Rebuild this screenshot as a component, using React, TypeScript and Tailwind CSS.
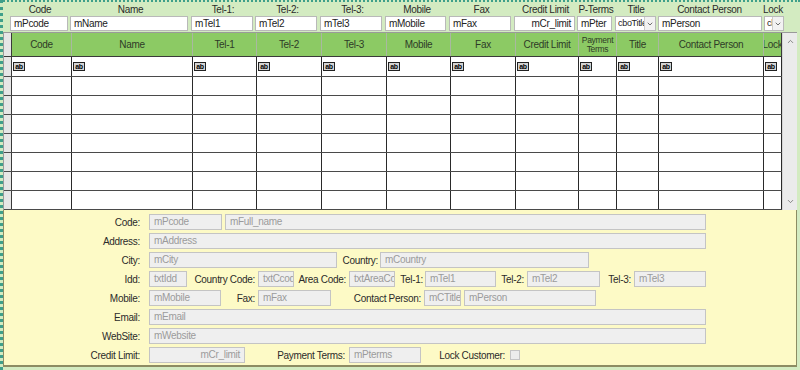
import React from 'react';
import { ChevronDown, ChevronUp } from 'lucide-react';

type Col = { key: string; label: React.ReactNode; w: string };

const columns: Col[] = [
  { key: 'code', label: 'Code', w: 'w-[60px]' },
  { key: 'name', label: 'Name', w: 'w-[121px]' },
  { key: 'tel1', label: 'Tel-1', w: 'w-[64px]' },
  { key: 'tel2', label: 'Tel-2', w: 'w-[65px]' },
  { key: 'tel3', label: 'Tel-3', w: 'w-[65px]' },
  { key: 'mobile', label: 'Mobile', w: 'w-[64px]' },
  { key: 'fax', label: 'Fax', w: 'w-[65px]' },
  { key: 'credit', label: 'Credit Limit', w: 'w-[63px]' },
  {
    key: 'pterms',
    label: (
      <span className="text-[8.5px] leading-[9px] block">
        Payment
        <br />
        Terms
      </span>
    ),
    w: 'w-[38px]',
  },
  { key: 'title', label: 'Title', w: 'w-[42px]' },
  { key: 'person', label: 'Contact Person', w: 'w-[105px]' },
  { key: 'lock', label: 'Lock', w: 'w-[18px]' },
];

const topFields = [
  { label: 'Code', value: 'mPcode', w: 'w-[60px]', iw: 'w-[58px]' },
  { label: 'Name', value: 'mName', w: 'w-[121px]', iw: 'w-[118px]' },
  { label: 'Tel-1:', value: 'mTel1', w: 'w-[64px]', iw: 'w-[62px]' },
  { label: 'Tel-2:', value: 'mTel2', w: 'w-[65px]', iw: 'w-[62px]' },
  { label: 'Tel-3:', value: 'mTel3', w: 'w-[65px]', iw: 'w-[62px]' },
  { label: 'Mobile', value: 'mMobile', w: 'w-[64px]', iw: 'w-[61px]' },
  { label: 'Fax', value: 'mFax', w: 'w-[65px]', iw: 'w-[62px]' },
  { label: 'Credit Limit', value: 'mCr_limit', w: 'w-[63px]', iw: 'w-[61px]', right: true },
  { label: 'P-Terms', value: 'mPter', w: 'w-[38px]', iw: 'w-[35px]' },
];

const AbIcon = () => (
  <span className="inline-flex items-center justify-center h-[9px] w-[12px] border border-[#222] bg-[#d4d4d4] text-[7px] font-bold leading-none text-black tracking-[-0.4px]">
    ab
  </span>
);

const FormInput = ({ w, v, right }: { w: string; v: string; right?: boolean }) => (
  <div
    className={`${w} h-[16px] shrink-0 border border-[#c4c4c4] bg-[#efefef] text-[#9b9b9b] px-[4px] leading-[14px] whitespace-nowrap overflow-hidden ${
      right ? 'text-right' : ''
    }`}
  >
    {v}
  </div>
);

const FormLabel = ({ w, t }: { w: string; t: string }) => (
  <div className={`${w} shrink-0 text-right text-[#2b2b2b] whitespace-nowrap`}>{t}</div>
);

const TopSelect = ({ w, v }: { w: string; v: string }) => (
  <div className={`${w} h-[15px] flex bg-white border border-[#b9b9b9] overflow-hidden`}>
    <span className="flex-1 min-w-0 pl-[2px] leading-[13px] text-[9px] text-[#222] whitespace-nowrap overflow-hidden">
      {v}
    </span>
    <span className="w-[11px] shrink-0 flex items-center justify-center border-l border-[#ccc] bg-[#f2f2f2]">
      <ChevronDown size={8} strokeWidth={2.5} className="text-[#555]" />
    </span>
  </div>
);

export default function App() {
  const rows = Array.from({ length: 8 });

  return (
    <div className="w-[800px] h-[370px] overflow-hidden bg-[#d3ebc1] border-l-[3px] border-t-2 border-dotted border-[#3f9f8a] font-['Liberation_Sans',Arial,sans-serif] text-[10px] tracking-[-0.3px] text-[#2b2b2b]">
      {/* Filter labels */}
      <div className="flex h-[14px] pl-[7px] items-center">
        {topFields.map((f) => (
          <div key={f.value} className={`${f.w} shrink-0 text-center`}>
            {f.label}
          </div>
        ))}
        <div className="w-[42px] shrink-0 text-center">Title</div>
        <div className="w-[105px] shrink-0 text-center">Contact Person</div>
        <div className="w-[22px] shrink-0 text-center">Lock</div>
      </div>

      {/* Filter inputs */}
      <div className="flex h-[16px] pl-[7px]">
        {topFields.map((f) => (
          <div key={f.value} className={`${f.w} shrink-0`}>
            <div
              className={`${f.iw} h-[15px] bg-white border border-[#b9b9b9] px-[3px] leading-[13px] text-[#222] whitespace-nowrap overflow-hidden ${
                f.right ? 'text-right' : ''
              }`}
            >
              {f.value}
            </div>
          </div>
        ))}
        <div className="w-[43px] shrink-0">
          <TopSelect w="w-[41px]" v="cboTitle" />
        </div>
        <div className="w-[106px] shrink-0">
          <div className="w-[104px] h-[15px] bg-white border border-[#b9b9b9] px-[3px] leading-[13px] text-[#222]">
            mPerson
          </div>
        </div>
        <TopSelect w="w-[20px]" v="cbo" />
      </div>

      {/* Grid */}
      <div className="flex w-[794px] border-t border-l border-[#9a9a9a] bg-white">
        <div className="flex flex-col">
          {/* header */}
          <div className="flex h-[24px] border-b border-[#3a3a3a]">
            <div className="w-[8px] shrink-0 bg-[#e6e6e6] border-r border-[#3a3a3a]" />
            {columns.map((c) => (
              <div
                key={c.key}
                className={`${c.w} shrink-0 bg-[#8cca64] border-r border-[#a9b8a0] flex items-center justify-center text-center text-[#2e3b27] overflow-hidden whitespace-nowrap last:border-[#3a3a3a]`}
              >
                {c.label}
              </div>
            ))}
          </div>
          {/* rows */}
          {rows.map((_, i) => (
            <div
              key={i}
              className={`flex border-b border-[#4a4a4a] ${i === 0 ? 'h-[20px]' : 'h-[19px]'}`}
            >
              <div className="w-[8px] shrink-0 bg-[#e6e6e6] border-r border-[#3a3a3a]" />
              {columns.map((c) => (
                <div key={c.key} className={`${c.w} shrink-0 border-r border-[#2a2a2a] pl-[1px] pt-[1px]`}>
                  {i === 0 && <AbIcon />}
                </div>
              ))}
            </div>
          ))}
        </div>
        {/* scrollbar */}
        <div className="w-[15px] shrink-0 bg-[#ebebeb] border-l border-[#d5d5d5] flex flex-col justify-between items-center py-[4px]">
          <ChevronUp size={9} strokeWidth={2} className="text-[#666]" />
          <ChevronDown size={9} strokeWidth={2} className="text-[#666]" />
        </div>
      </div>

      {/* Detail panel */}
      <div className="w-[794px] h-[157px] bg-[#fdfac6] border-l border-r border-b-2 border-[#8d8c63] pt-[4px] flex flex-col gap-[3px]">
        <div className="flex items-center h-[16px]">
          <FormLabel w="w-[136px]" t="Code:" />
          <div className="w-[9px] shrink-0" />
          <FormInput w="w-[73px]" v="mPcode" />
          <div className="w-[3px] shrink-0" />
          <FormInput w="w-[481px]" v="mFull_name" />
        </div>

        <div className="flex items-center h-[16px]">
          <FormLabel w="w-[136px]" t="Address:" />
          <div className="w-[9px] shrink-0" />
          <FormInput w="w-[557px]" v="mAddress" />
        </div>

        <div className="flex items-center h-[16px]">
          <FormLabel w="w-[136px]" t="City:" />
          <div className="w-[9px] shrink-0" />
          <FormInput w="w-[188px]" v="mCity" />
          <FormLabel w="w-[41px]" t="Country:" />
          <div className="w-[2px] shrink-0" />
          <FormInput w="w-[209px]" v="mCountry" />
        </div>

        <div className="flex items-center h-[16px]">
          <FormLabel w="w-[136px]" t="Idd:" />
          <div className="w-[9px] shrink-0" />
          <FormInput w="w-[38px]" v="txtIdd" />
          <FormLabel w="w-[68px]" t="Country Code:" />
          <div className="w-[3px] shrink-0" />
          <FormInput w="w-[36px]" v="txtCcod" />
          <FormLabel w="w-[52px]" t="Area Code:" />
          <div className="w-[3px] shrink-0" />
          <FormInput w="w-[46px]" v="txtAreaCo" />
          <FormLabel w="w-[28px]" t="Tel-1:" />
          <div className="w-[2px] shrink-0" />
          <FormInput w="w-[71px]" v="mTel1" />
          <FormLabel w="w-[28px]" t="Tel-2:" />
          <div className="w-[3px] shrink-0" />
          <FormInput w="w-[73px]" v="mTel2" />
          <FormLabel w="w-[31px]" t="Tel-3:" />
          <div className="w-[3px] shrink-0" />
          <FormInput w="w-[72px]" v="mTel3" />
        </div>

        <div className="flex items-center h-[16px]">
          <FormLabel w="w-[136px]" t="Mobile:" />
          <div className="w-[9px] shrink-0" />
          <FormInput w="w-[72px]" v="mMobile" />
          <FormLabel w="w-[34px]" t="Fax:" />
          <div className="w-[3px] shrink-0" />
          <FormInput w="w-[73px]" v="mFax" />
          <FormLabel w="w-[90px]" t="Contact Person:" />
          <div className="w-[3px] shrink-0" />
          <FormInput w="w-[37px]" v="mCTitle" />
          <div className="w-[3px] shrink-0" />
          <FormInput w="w-[132px]" v="mPerson" />
        </div>

        <div className="flex items-center h-[16px]">
          <FormLabel w="w-[136px]" t="Email:" />
          <div className="w-[9px] shrink-0" />
          <FormInput w="w-[557px]" v="mEmail" />
        </div>

        <div className="flex items-center h-[16px]">
          <FormLabel w="w-[136px]" t="WebSite:" />
          <div className="w-[9px] shrink-0" />
          <FormInput w="w-[557px]" v="mWebsite" />
        </div>

        <div className="flex items-center h-[16px]">
          <FormLabel w="w-[136px]" t="Credit Limit:" />
          <div className="w-[9px] shrink-0" />
          <FormInput w="w-[96px]" v="mCr_limit" right />
          <FormLabel w="w-[100px]" t="Payment Terms:" />
          <div className="w-[4px] shrink-0" />
          <FormInput w="w-[72px]" v="mPterms" />
          <FormLabel w="w-[84px]" t="Lock Customer:" />
          <div className="w-[5px] shrink-0" />
          <div className="w-[10px] h-[10px] shrink-0 border border-[#c4c4c4] bg-[#ececec]" />
        </div>
      </div>
    </div>
  );
}
